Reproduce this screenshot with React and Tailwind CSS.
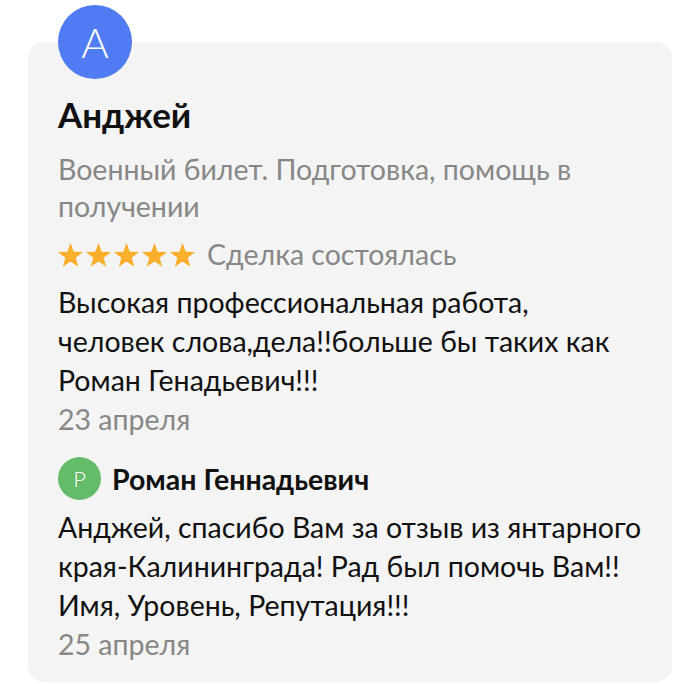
const Star = () => (
  <svg viewBox="0 0 24 23" className="w-[25px] h-[24px]" fill="#fbae2c">
    <path d="M12 0L15.06 8.41L24 8.72L16.95 14.23L19.42 22.83L12 17.82L4.58 22.83L7.05 14.23L0 8.72L8.94 8.41Z" />
  </svg>
);

const App = () => {
  return (
    <div
      className="min-h-screen bg-white pt-[42px] px-[28px]"
      style={{ fontFamily: "Lato, 'Noto Sans', sans-serif" }}
    >
      <div className="flex flex-col bg-[#f4f4f4] rounded-2xl pl-[30px] pr-[20px] pb-[18px]">
        {/* Author avatar */}
        <div className="-mt-[37px] w-[74px] h-[74px] rounded-full bg-[#4f7cf3] flex items-center justify-center text-white text-[42px] font-light leading-none">
          A
        </div>

        <h1 className="mt-[15px] text-[35px] leading-[40px] font-bold text-[#111]">
          Анджей
        </h1>

        <p className="mt-[17px] text-[28.5px] leading-[37px] text-[#878787]">
          Военный билет. Подготовка, помощь в получении
        </p>

        <div className="mt-[11px] flex items-center gap-[12px]">
          <div className="flex gap-[3px]">
            <Star />
            <Star />
            <Star />
            <Star />
            <Star />
          </div>
          <span className="text-[28.5px] leading-[37px] text-[#878787]">
            Сделка состоялась
          </span>
        </div>

        <p className="mt-[10px] text-[28.5px] leading-[39px] text-[#111]">
          Высокая профессиональная работа,
          <br />
          человек слова,дела!!больше бы таких как
          <br />
          Роман Генадьевич!!!
        </p>
        <p className="text-[28.5px] leading-[39px] text-[#878787]">23 апреля</p>

        {/* Reply */}
        <div className="mt-[18px] flex items-center gap-[11px]">
          <div className="w-[43px] h-[43px] rounded-full bg-[#64bb6a] flex items-center justify-center text-white text-[22px] font-light leading-none">
            Р
          </div>
          <span className="text-[28.5px] leading-[36px] font-bold text-[#111]">
            Роман Геннадьевич
          </span>
        </div>
        <p className="mt-[8px] text-[28.5px] leading-[39px] text-[#111]">
          Анджей, спасибо Вам за отзыв из янтарного
          <br />
          края-Калининграда! Рад был помочь Вам!!
          <br />
          Имя, Уровень, Репутация!!!
        </p>
        <p className="text-[28.5px] leading-[39px] text-[#878787]">25 апреля</p>
      </div>
    </div>
  );
};

export default App;
